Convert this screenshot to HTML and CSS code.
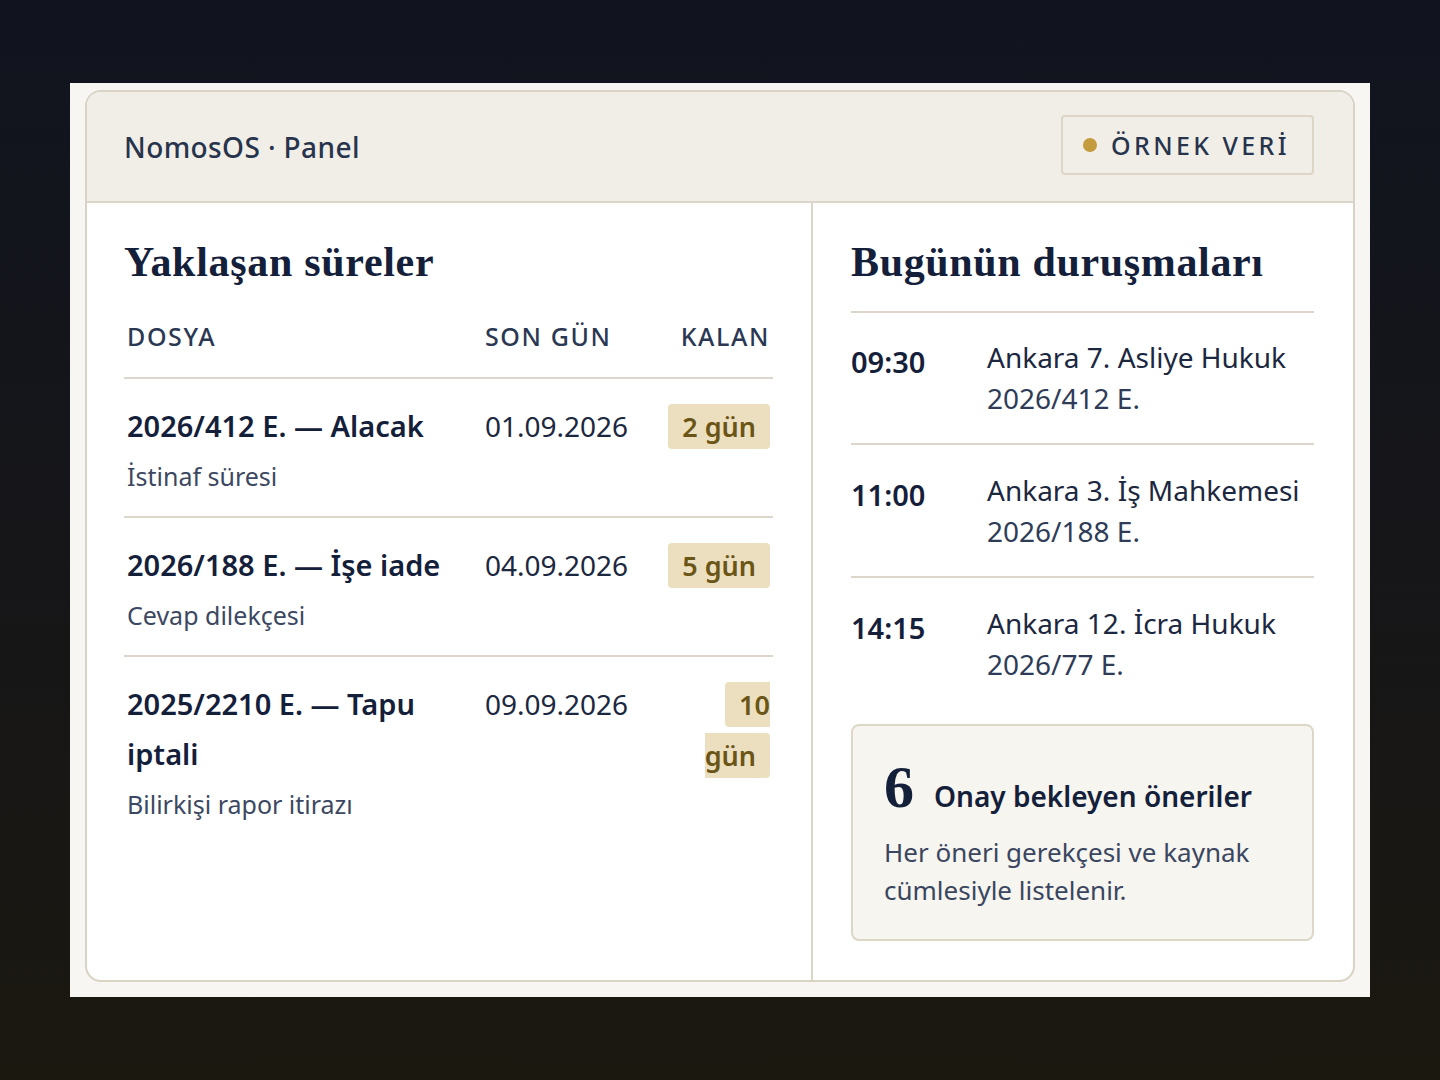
FILE: index.html
```html
<!DOCTYPE html>
<html lang="tr">
<head>
<meta charset="utf-8">
<title>NomosOS · Panel</title>
<link rel="stylesheet" href="styles.css">
</head>
<body>
<div class="frame">
  <div class="card">
    <header class="header">
      <div class="brand">NomosOS · Panel</div>
      <div class="sample"><span class="dot"></span>ÖRNEK VERİ</div>
    </header>
    <div class="body">
      <section class="col left">
        <h2 class="title">Yaklaşan süreler</h2>
        <table class="deadlines">
          <colgroup>
            <col class="c-file">
            <col class="c-date">
            <col class="c-left">
          </colgroup>
          <thead>
            <tr><th>DOSYA</th><th>SON GÜN</th><th class="right">KALAN</th></tr>
          </thead>
          <tbody>
            <tr>
              <td><div class="case">2026/412 E. — Alacak</div><div class="sub">İstinaf süresi</div></td>
              <td class="date">01.09.2026</td>
              <td class="right"><span class="pill">2 gün</span></td>
            </tr>
            <tr>
              <td><div class="case">2026/188 E. — İşe iade</div><div class="sub">Cevap dilekçesi</div></td>
              <td class="date">04.09.2026</td>
              <td class="right"><span class="pill">5 gün</span></td>
            </tr>
            <tr>
              <td><div class="case">2025/2210 E. — Tapu iptali</div><div class="sub">Bilirkişi rapor itirazı</div></td>
              <td class="date">09.09.2026</td>
              <td class="right"><span class="pill">10 gün</span></td>
            </tr>
          </tbody>
        </table>
      </section>
      <section class="col right-col">
        <h2 class="title wide">Bugünün duruşmaları</h2>
        <ul class="hearings">
          <li><span class="time">09:30</span><div class="where"><div>Ankara 7. Asliye Hukuk</div><div>2026/412 E.</div></div></li>
          <li><span class="time">11:00</span><div class="where"><div>Ankara 3. İş Mahkemesi</div><div>2026/188 E.</div></div></li>
          <li><span class="time">14:15</span><div class="where"><div>Ankara 12. İcra Hukuk</div><div>2026/77 E.</div></div></li>
        </ul>
        <div class="pending">
          <div class="pending-head"><span class="num">6</span><span class="label">Onay bekleyen öneriler</span></div>
          <p class="pending-text">Her öneri gerekçesi ve kaynak cümlesiyle listelenir.</p>
        </div>
      </section>
    </div>
  </div>
</div>
</body>
</html>
```

FILE: styles.css
```css
* { box-sizing: border-box; }
html, body { margin: 0; padding: 0; }
body {
  width: 1440px;
  height: 1080px;
  background: linear-gradient(180deg, #11141f 0%, #161619 50%, #1b1810 100%);
  font-family: "Noto Sans", "Open Sans", sans-serif;
  color: #17223a;
  padding-top: 83px;
}
.frame {
  margin: 0 70px;
  height: 914px;
  background: #f8f6f2;
  padding: 7px 15px 15px;
}
.card {
  height: 892px;
  background: #ffffff;
  border: 2px solid #d9d3c5;
  border-radius: 16px;
  overflow: hidden;
  display: flex;
  flex-direction: column;
}
.header {
  height: 111px;
  flex: none;
  background: #f1eee8;
  border-bottom: 2px solid #dcd6ca;
  display: flex;
  align-items: center;
  justify-content: space-between;
  padding: 0 39px 0 37px;
}
.brand {
  font-size: 28px;
  font-weight: 500;
  color: #27344c;
  letter-spacing: 0.4px;
}
.sample {
  height: 60px;
  margin-top: -3px;
  padding: 0 22px 0 20px;
  border: 2px solid #ddd6c6;
  border-radius: 4px;
  display: flex;
  align-items: center;
  gap: 14px;
  font-size: 25px;
  font-weight: 500;
  letter-spacing: 3.4px;
  color: #27344c;
}
.dot {
  width: 14px;
  height: 14px;
  border-radius: 50%;
  background: #c49b3d;
}
.body {
  flex: 1;
  display: grid;
  grid-template-columns: 726px 1fr;
}
.col { padding: 36px 38px 0 37px; }
.left { border-right: 2px solid #dcd6ca; }
.right-col { padding-left: 38px; padding-right: 39px; }
.title {
  margin: 0;
  font-family: "Liberation Serif", "Times New Roman", serif;
  font-weight: 700;
  font-size: 42px;
  line-height: 46px;
  letter-spacing: 0.7px;
  color: #14203a;
}
.title.wide { letter-spacing: 0.65px; }
.deadlines {
  width: 100%;
  border-collapse: collapse;
  table-layout: fixed;
  margin-top: 35px;
}
.c-file { width: 358px; }
.c-date { width: 185px; }
.c-left { width: auto; }
.deadlines th {
  text-align: left;
  font-size: 25px;
  font-weight: 500;
  letter-spacing: 1.6px;
  color: #2b3853;
  padding: 0 3px 25px;
  line-height: 32px;
  border-bottom: 2px solid #ddd6cc;
}
.deadlines th.right, .deadlines td.right { text-align: right; }
.deadlines td {
  vertical-align: top;
  padding: 22px 3px 15px;
  font-size: 28px;
  line-height: 50px;
}
.deadlines tbody tr + tr td { border-top: 2px solid #ddd6cc; }
.deadlines td.right { padding-right: 3px; padding-left: 0; }
.case {
  font-weight: 600;
  font-size: 29px;
  color: #14203a;
}
.sub {
  font-size: 25px;
  color: #3c4862;
  line-height: 50px;
}
.date { color: #1c2740; }
.pill {
  background: #ebdfbf;
  color: #6a5516;
  font-weight: 600;
  padding: 4px 14px;
  border-radius: 4px;
  font-size: 27px;
}
.hearings {
  list-style: none;
  margin: 26px 0 0;
  padding: 0;
  border-top: 2px solid #ddd6cc;
}
.hearings li {
  display: grid;
  grid-template-columns: 136px 1fr;
  padding: 25px 0 24px;
  border-bottom: 2px solid #ddd6cc;
}
.hearings li:first-child { padding-top: 24px; }
.hearings li:last-child { border-bottom: none; padding-bottom: 27px; }
.time {
  font-size: 29px;
  font-weight: 600;
  line-height: 41px;
  padding-top: 4px;
  color: #14203a;
}
.where {
  font-size: 28px;
  line-height: 41px;
  color: #1c2740;
}
.where div + div { color: #2f3c57; }
.pending {
  margin-top: 12px;
  background: #f7f5f0;
  border: 2px solid #ddd7c8;
  border-radius: 8px;
  padding: 33px 30px 30px 31px;
}
.pending-head {
  display: flex;
  align-items: baseline;
  gap: 20px;
}
.num {
  font-family: "Liberation Serif", "Times New Roman", serif;
  font-weight: 700;
  font-size: 60px;
  line-height: 56px;
  color: #14203a;
}
.label {
  font-size: 28px;
  font-weight: 600;
  color: #14203a;
}
.pending-text {
  margin: 18px 0 0;
  font-size: 26px;
  line-height: 38px;
  color: #3a4660;
}
```
